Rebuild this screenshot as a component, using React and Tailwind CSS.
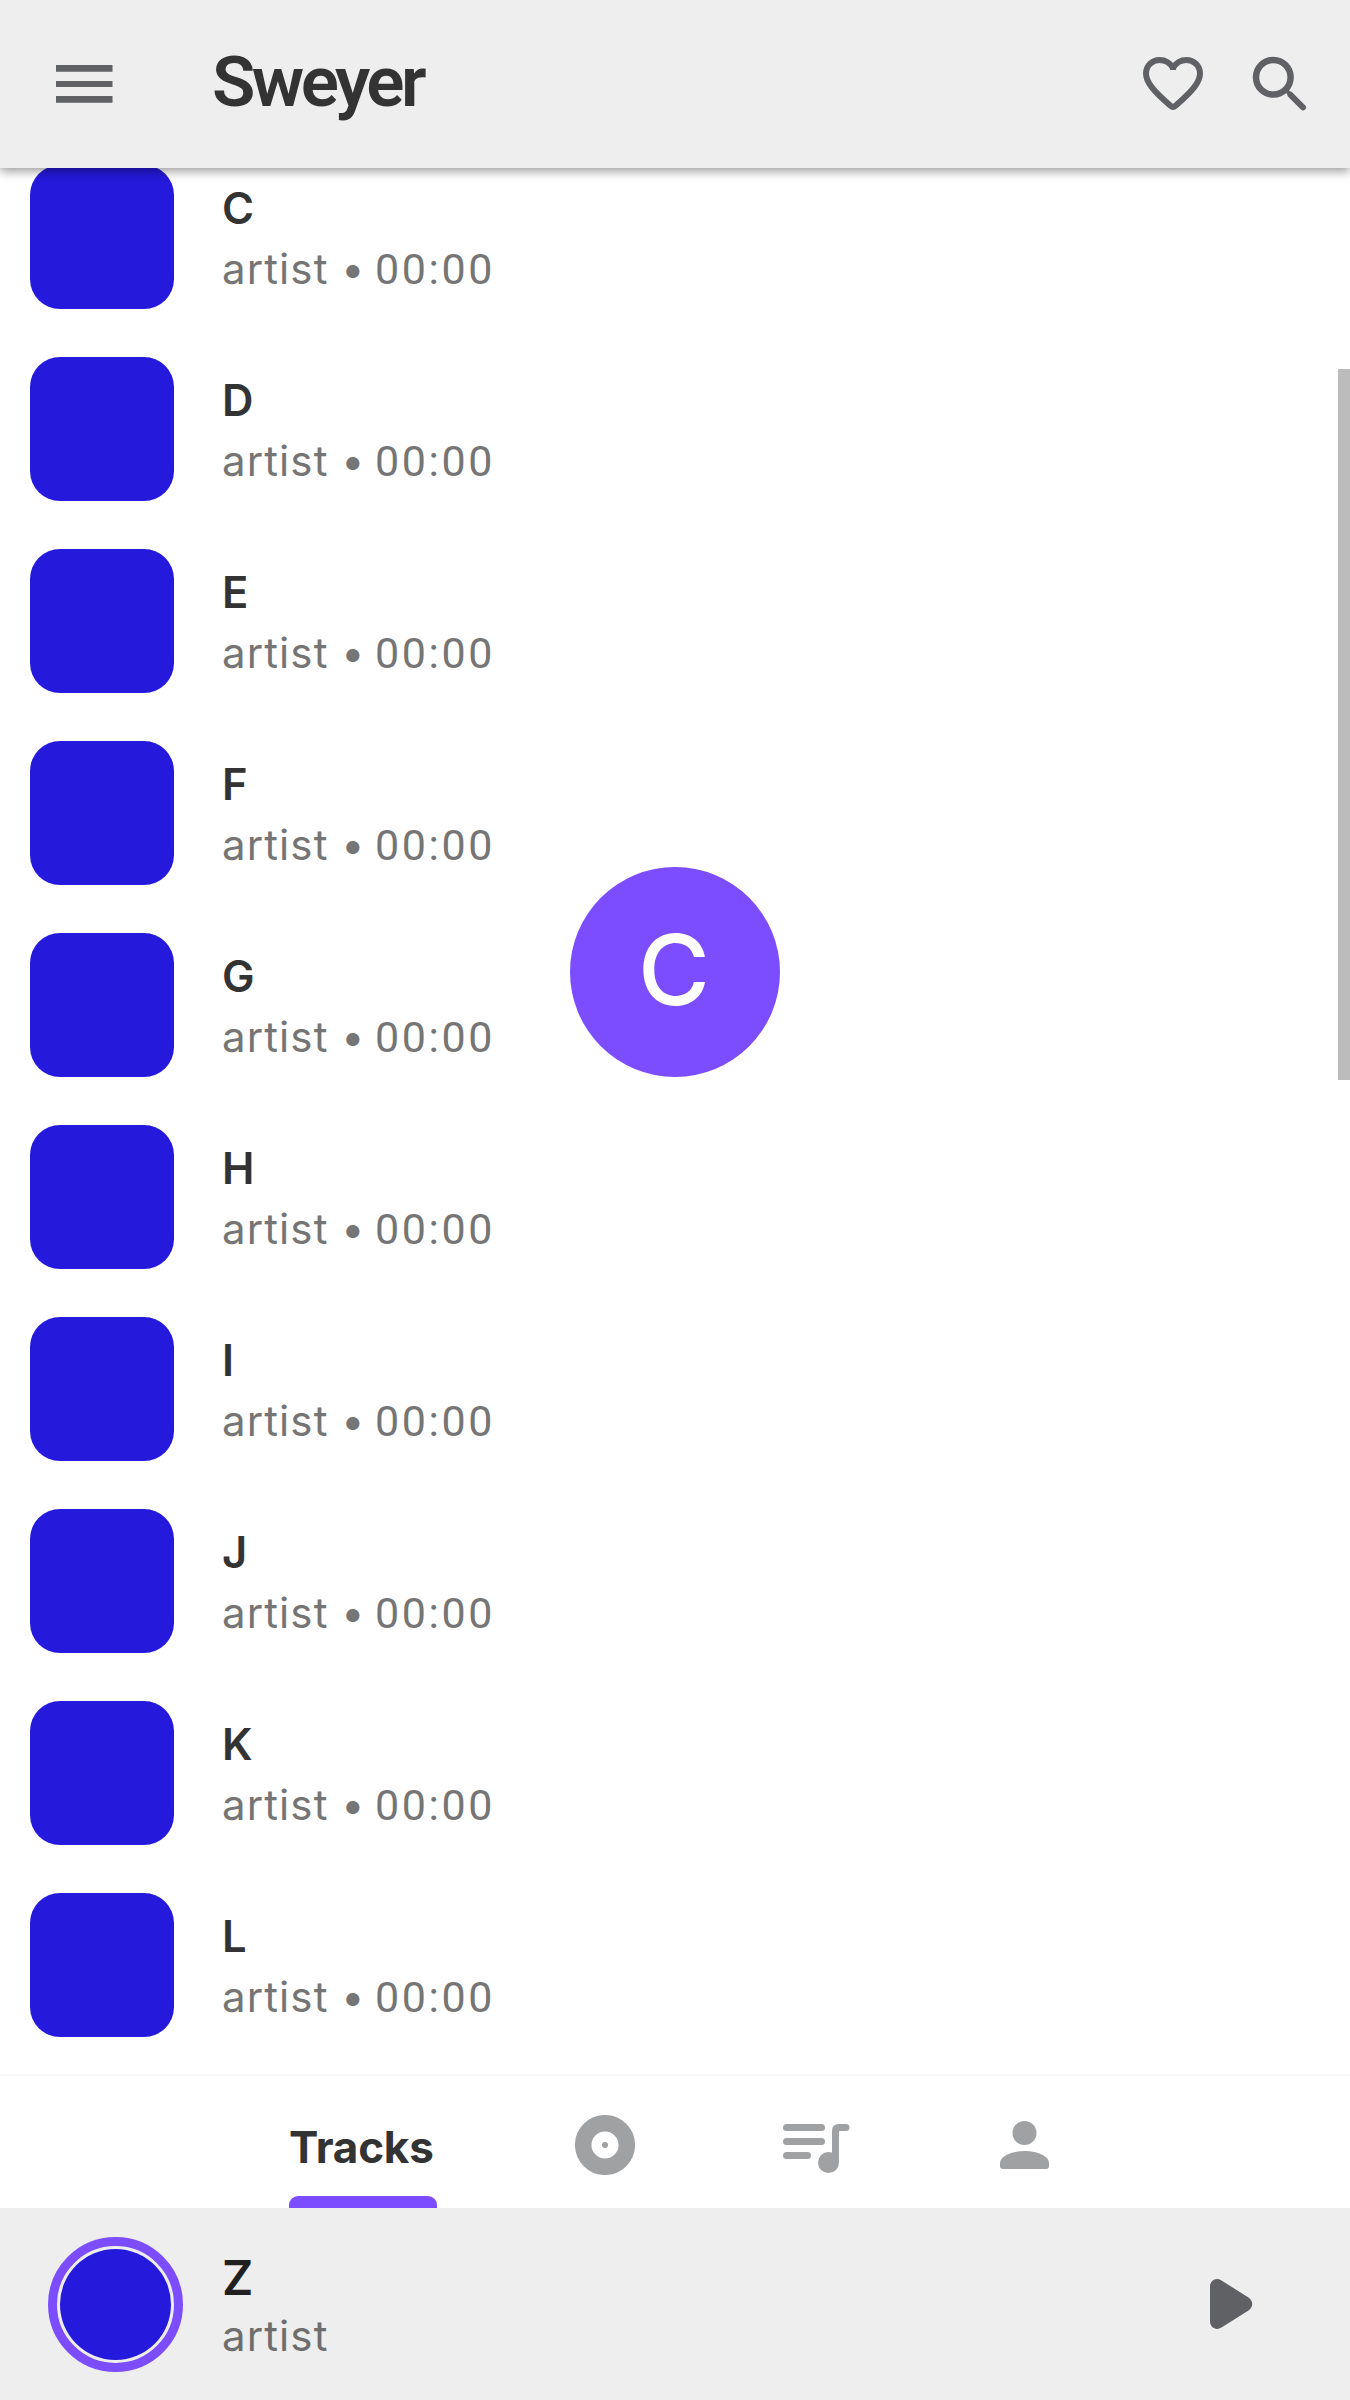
const tracks = ["C", "D", "E", "F", "G", "H", "I", "J", "K", "L"];

function MenuIcon() {
  return (
    <svg className="h-[38px] w-[57px]" viewBox="0 0 57 38" fill="currentColor">
      <path d="M0 0h56.5v6.7H0zM0 16h56.5v6H0zM0 31h56.5v6.7H0z" />
    </svg>
  );
}

function HeartIcon() {
  return (
    <svg className="h-[60px] w-[66px]" viewBox="0 0 66 60" fill="none" stroke="currentColor" strokeWidth="6" strokeLinejoin="bevel">
      <path d="M33 14C30 8.800 25 6 19.500 6C12 6 6 11.800 6 19.500C6 28 13 36.500 30.500 51.800Q33 54 35.500 51.800C53 36.500 60 28 60 19.500C60 11.800 54 6 46.500 6C41 6 36 8.800 33 14Z" />
      <path d="M33 11v5" />
    </svg>
  );
}

function SearchIcon() {
  return (
    <svg className="h-[56px] w-[56px]" viewBox="0 0 56 56" fill="none" stroke="currentColor">
      <circle cx="21.300" cy="21.300" r="17.300" strokeWidth="6.500" />
      <path d="M33 33.200L38 38.200" strokeWidth="4" />
      <path d="M38.500 38.800L51 51.300" strokeWidth="6" strokeLinecap="round" />
    </svg>
  );
}

function DiscIcon() {
  return (
    <svg className="h-[60px] w-[60px]" viewBox="0 0 60 60">
      <circle cx="30" cy="30" r="21.800" fill="none" stroke="currentColor" strokeWidth="16.500" />
      <circle cx="30" cy="30" r="3" fill="currentColor" />
    </svg>
  );
}

function QueueIcon() {
  return (
    <svg className="h-[50px] w-[67px]" viewBox="0 0 67 50" fill="currentColor">
      <rect width="42" height="7" rx="3.500" />
      <rect y="14" width="42" height="7" rx="3.500" />
      <rect y="28" width="28" height="7" rx="3.500" />
      <circle cx="45.500" cy="38.500" r="10.500" />
      <path d="M49 38.500V7Q49 0 56 0H63a3.500 3.500 0 0 1 0 7H56V38.500Z" />
    </svg>
  );
}

function PersonIcon() {
  return (
    <svg className="h-[49px] w-[49px]" viewBox="0 0 49 49" fill="currentColor">
      <circle cx="24.500" cy="12" r="12" />
      <path d="M0 42C0 35 12 30 24.500 30S49 35 49 42V45Q49 48 46 48H3Q0 48 0 45Z" />
    </svg>
  );
}

function PlayIcon() {
  return (
    <svg className="h-[50px] w-[43px]" viewBox="0 0 43 50" fill="currentColor">
      <path d="M0 8C0 1.500 6-2 11.500 1.500L38.500 18.500C43.500 22 43.500 28 38.500 31.500L11.500 48.500C6 52 0 48.500 0 42Z" />
    </svg>
  );
}

function Track({ title }) {
  return (
    <li className="flex h-48 shrink-0 items-center pl-[30px]">
      <div className="h-36 w-36 rounded-[30px] bg-[#2519dc]" />
      <div className="ml-12 flex flex-col pt-[2px]">
        <span className="h-[60px] text-[43.500px] leading-[60px] font-semibold text-[#333333]">{title}</span>
        <span className="flex h-[60px] text-[42px] leading-[62px] text-[#757575]">
          <span className="w-[119px] tracking-[1.1px]">artist</span>
          <span className="w-[34px]">•</span>
          <span className="font-['Roboto',sans-serif] text-[43px] tracking-[2.6px]">00:00</span>
        </span>
      </div>
    </li>
  );
}

export default function App() {
  return (
    <div className="relative flex h-[2400px] w-[1350px] flex-col overflow-hidden bg-white font-['Inter',sans-serif]">
      <header className="z-10 flex h-[168px] shrink-0 items-center bg-[#eeeeee] pr-[42px] pl-14 text-[#606165] shadow-[0_3px_10px_rgba(0,0,0,0.42)]">
        <MenuIcon />
        <h1 className="ml-[99px] pb-[5px] font-['Roboto',sans-serif] text-[71px] leading-none font-semibold tracking-[-3.5px] text-[#333333]">Sweyer</h1>
        <div className="ml-auto flex items-center gap-[46px]">
          <HeartIcon />
          <SearchIcon />
        </div>
      </header>

      <ul className="-mt-[27px] flex h-[1932px] shrink-0 flex-col overflow-hidden">
        {tracks.map((t) => <Track key={t} title={t} />)}
      </ul>

      <nav className="mt-[3px] flex h-[132px] shrink-0 pl-[289px] shadow-[0_-1px_3px_rgba(0,0,0,0.05)]">
        <div className="flex w-[148px] flex-col justify-between">
          <span className="pt-[41px] text-[44px] leading-[60px] font-bold tracking-[-0.2px] text-[#333333]">Tracks</span>
          <span className="h-3 rounded-t-[9px] bg-[#7c4dff]" />
        </div>
        <div className="flex pt-[39px] pl-[138px] text-[#a0a1a3]">
          <DiscIcon />
          <div className="ml-[148px] pt-[9px]"><QueueIcon /></div>
          <div className="ml-[150px] pt-[6px]"><PersonIcon /></div>
        </div>
      </nav>

      <footer className="flex h-48 shrink-0 items-center bg-[#eeeeee] pr-[97px] pl-12">
        <div className="flex h-[135px] w-[135px] items-center justify-center rounded-full border-[9px] border-[#7c4dff]">
          <div className="h-[111px] w-[111px] rounded-full bg-[#2519dc]" />
        </div>
        <div className="ml-[39px] flex flex-col pt-[6px]">
          <span className="h-[58px] text-[48px] leading-[60px] font-semibold text-[#202020]">Z</span>
          <span className="h-[60px] text-[42px] leading-[60px] tracking-[1.1px] text-[#6e6e6e]">artist</span>
        </div>
        <div className="ml-auto text-[#606165]"><PlayIcon /></div>
      </footer>

      <div className="absolute top-[369px] right-0 h-[711px] w-3 bg-[#bcbcbc]" />
      <div className="absolute top-[867px] left-[570px] flex h-[210px] w-[210px] items-center justify-center rounded-full bg-[#7c4dff] pr-[2px] pb-1 text-[98px] leading-none font-medium text-white">C</div>
    </div>
  );
}
